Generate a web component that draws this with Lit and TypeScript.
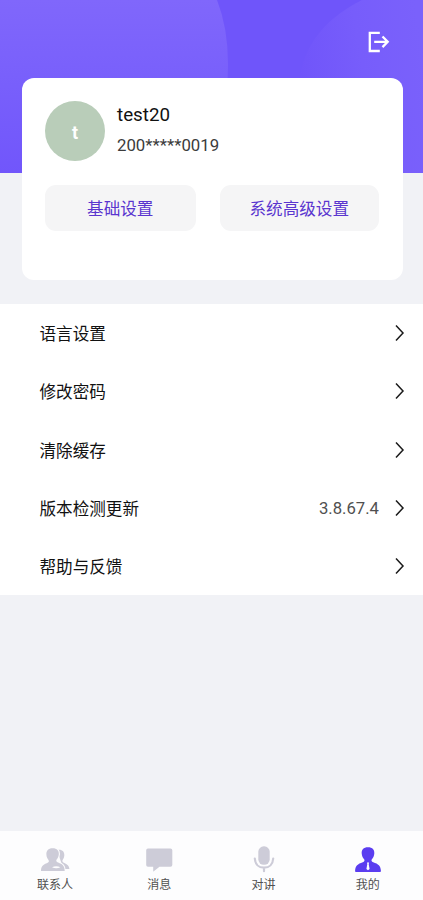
import { LitElement, html, css, svg } from "lit";
import { customElement } from "lit/decorators.js";
import { classMap } from "lit/directives/class-map.js";

const rows = [
  { label: "语言设置", value: "" },
  { label: "修改密码", value: "" },
  { label: "清除缓存", value: "" },
  { label: "版本检测更新", value: "3.8.67.4" },
  { label: "帮助与反馈", value: "" },
];

const contacts = svg`
  <path d="M17 4C22 3 24.600 5.500 24.300 9.500c-.2 2.200-1 3.600-1.800 4.800-.4 1.300.2 1.900 1.900 2.700 3.400 1.500 4.800 2.900 5 5.900h-6z"/>
  <path d="M12.500 2.200c4.700 0 6.700 2.600 6.300 6.400-.2 2.200-1.200 3.900-2.300 5.200-.6 1.200-.1 2 1.600 2.700 4.500 1.700 6.500 3.300 6.600 8.500H1c0-4.700 1.800-6.200 5.700-7.800 2.300-.9 2.600-1.900 1.800-3.200C7.300 12.700 6.500 11 6.400 8.600 6.100 4.800 8.300 2.200 12.500 2.200z" stroke="#fdfdfe" stroke-width="2.200" style="paint-order: stroke"/>
  <path d="M12 21.300q4.200-2 8.400 0-4.200 2-8.400 0z" fill="#fdfdfe"/>`;

const message = svg`<path d="M4 2.500h22.500a1.800 1.800 0 0 1 1.800 1.800v14.600a1.800 1.800 0 0 1-1.800 1.800H15.500L9.800 25.300q-.6.400-.6-.4v-4.200H4a1.800 1.800 0 0 1-1.800-1.800V4.300A1.800 1.800 0 0 1 4 2.500z"/>`;

const mic = svg`
  <rect x="9.300" y="0.300" width="11.400" height="18.500" rx="5.500"/>
  <path d="M5.800 12.500c.3 5.600 4 9.200 9.200 9.200s8.900-3.600 9.200-9.200M15 21.500v3.700" fill="none" stroke="currentColor" stroke-width="2.200" stroke-linecap="round"/>`;

const me = svg`
  <path d="M15 1.200c4.600 0 6.700 2.600 6.300 6.300-.2 2.600-1.200 4.500-2.600 6.100-.5 1.400-.1 2 1.500 2.600 5.200 1.800 7.400 3.400 7.700 8.400.1 1-.3 1.500-1.200 1.500H3.300c-.9 0-1.300-.5-1.200-1.500.3-5 2.500-6.600 7.700-8.400 1.600-.6 2-1.200 1.500-2.600C9.900 12 8.900 10.100 8.700 7.500 8.300 3.800 10.400 1.200 15 1.200z"/>
  <path d="M14 16.500h2.100l-.4 1.800.9 4.700-1.600 1.200-1.600-1.200.9-4.700z" fill="#fff"/>`;

const tabs = [
  { label: "联系人", icon: contacts, active: false },
  { label: "消息", icon: message, active: false },
  { label: "对讲", icon: mic, active: false },
  { label: "我的", icon: me, active: true },
];

@customElement("app-root")
export class AppRoot extends LitElement {
  static styles = css`
    :host {
      display: flex;
      flex-direction: column;
      position: relative;
      height: 900px;
      box-sizing: border-box;
      overflow: hidden;
      background: #f1f2f6;
      color: #111;
      font-family: Roboto, "Noto Sans CJK SC", sans-serif;
      font-size: 16.6px;
    }
    .backdrop {
      position: absolute;
      top: 0;
      left: 0;
      width: 100%;
      height: 172.6px;
    }
    .top {
      position: relative;
      display: flex;
      justify-content: flex-end;
      height: 77.5px;
      padding: 30px 32px 0 0;
      box-sizing: border-box;
      flex: none;
    }
    .logout {
      width: 24px;
      height: 24px;
    }
    .card {
      position: relative;
      flex: none;
      height: 202.500px;
      margin: 0 20.500px 24px 21.500px;
      padding: 23.500px 23.500px 0;
      box-sizing: border-box;
      background: #fff;
      border-radius: 12px;
    }
    .profile {
      display: flex;
      align-items: center;
      gap: 12px;
      height: 60px;
    }
    .avatar {
      display: flex;
      align-items: center;
      justify-content: center;
      width: 60px;
      height: 60px;
      padding-top: 2px;
      box-sizing: border-box;
      border-radius: 50%;
      background: #b9cdb9;
      color: #fff;
      font-size: 18px;
      font-weight: 700;
    }
    .name {
      font-size: 18.800px;
      line-height: 28px;
    }
    .account {
      color: #3c3c3c;
      font-size: 16.800px;
      line-height: 32px;
    }
    .actions {
      display: flex;
      gap: 24px;
      margin-top: 23.500px;
    }
    .action {
      flex: 0 0 150.500px;
      height: 46.500px;
      border: 0;
      padding: 0;
      border-radius: 11px;
      background: #f5f5f6;
      color: #5a35cf;
      font: inherit;
    }
    .action.wide {
      flex: 1;
    }
    .list {
      flex: none;
      background: #fff;
    }
    .row {
      display: flex;
      align-items: center;
      height: 58.300px;
      padding: 0 18px 0 39.500px;
    }
    .label {
      flex: 1;
    }
    .value {
      color: #505050;
      font-size: 16.700px;
      margin-right: 15px;
    }
    .chevron {
      width: 11px;
      height: 18px;
    }
    .tabs {
      display: flex;
      flex: none;
      height: 69px;
      margin-top: auto;
      padding: 0 3px;
      background: #fdfdfe;
    }
    .tab {
      flex: 1;
      display: flex;
      flex-direction: column;
      align-items: center;
      padding-top: 15px;
      color: #cdccd8;
    }
    .tab.active {
      color: #5b3df0;
    }
    .glyph {
      width: 30px;
      height: 27px;
      fill: currentColor;
    }
    .caption {
      margin-top: 3px;
      color: #505050;
      font-size: 12px;
      line-height: 18px;
    }
  `;

  render() {
    return html`
      <svg class="backdrop" viewBox="0 0 423 172.600" preserveAspectRatio="none">
        <defs>
          <linearGradient id="left" x1="0" y1="0" x2="0" y2="1">
            <stop offset="0" stop-color="#8067fb" />
            <stop offset="0.500" stop-color="#785ffb" />
            <stop offset="1" stop-color="#7156fb" />
          </linearGradient>
          <linearGradient id="right" x1="300" y1="70" x2="423" y2="50" gradientUnits="userSpaceOnUse">
            <stop offset="0" stop-color="#7055fa" />
            <stop offset="0.500" stop-color="#775dfb" />
            <stop offset="1" stop-color="#7a61fb" />
          </linearGradient>
        </defs>
        <rect width="423" height="173" fill="#6f55fa" />
        <path d="M362 0Q298 32 298 96V173H423V0Z" fill="url(#right)" />
        <path d="M0 0H217Q228 28 228 64Q228 120 205 173H0Z" fill="url(#left)" />
      </svg>
      <div class="top">
        <svg class="logout" viewBox="0 0 24 24" fill="none" stroke="#fff" stroke-width="2.300">
          <path d="M12.800 2.800H2.800V21H12.800M7.200 11.800H21M15.500 6.500L20.700 11.800L15.500 17.100" />
        </svg>
      </div>
      <section class="card">
        <div class="profile">
          <div class="avatar">t</div>
          <div>
            <div class="name">test20</div>
            <div class="account">200*****0019</div>
          </div>
        </div>
        <div class="actions">
          <button class="action">基础设置</button>
          <button class="action wide">系统高级设置</button>
        </div>
      </section>
      <section class="list">
        ${rows.map(
          (r) => html`<div class="row">
            <span class="label">${r.label}</span>
            <span class="value">${r.value}</span>
            <svg class="chevron" viewBox="0 0 11 18" fill="none" stroke="#1a1a1a" stroke-width="1.500">
              <path d="M2 1.500L9 9L2 16.500" />
            </svg>
          </div>`
        )}
      </section>
      <nav class="tabs">
        ${tabs.map(
          (t) => html`<div class=${classMap({ tab: true, active: t.active })}>
            <svg class="glyph" viewBox="0 0 30 27">${t.icon}</svg>
            <span class="caption">${t.label}</span>
          </div>`
        )}
      </nav>
    `;
  }
}
